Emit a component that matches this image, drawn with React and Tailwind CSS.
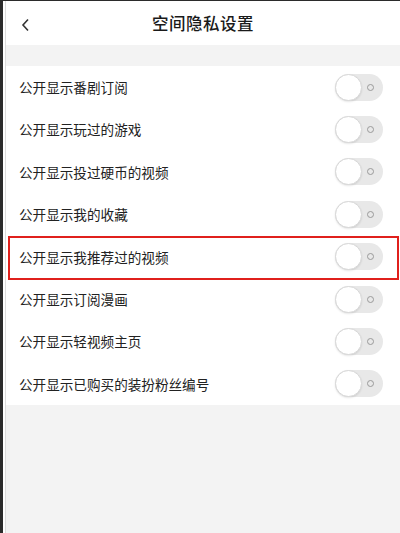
import React from "react";

const items = [
  "公开显示番剧订阅",
  "公开显示玩过的游戏",
  "公开显示投过硬币的视频",
  "公开显示我的收藏",
  "公开显示我推荐过的视频",
  "公开显示订阅漫画",
  "公开显示轻视频主页",
  "公开显示已购买的装扮粉丝编号",
];

const Toggle = () => (
  <div className="relative w-[48px] h-[27px] rounded-full bg-[#e8e8e8]">
    <div className="absolute left-0 top-0 w-[27px] h-[27px] rounded-full bg-white border border-[#d8d8d8] shadow-[0_1px_2px_rgba(0,0,0,0.1)]" />
    <div className="absolute right-[9px] top-[10px] w-[7px] h-[7px] rounded-full border-[1.5px] border-[#9a9a9a]" />
  </div>
);

export default function App() {
  return (
    <div
      className="flex w-[400px] h-[533px] bg-[#2b2b2b] pt-px"
      style={{ fontFamily: '"Noto Sans CJK SC", "Noto Sans", sans-serif' }}
    >
      <div className="w-[3px]" />
      <div className="w-[2px] bg-white" />
      <div className="w-px bg-[#dcdcdc]" />
      <div className="flex-1 flex flex-col bg-[#f3f3f3]">
        {/* Header */}
        <div className="relative flex items-center justify-center h-[44px] bg-white">
          <svg className="absolute left-[15px] top-[17px]" width="9" height="14" viewBox="0 0 9 14">
            <path d="M7 1.5 L2 7 L7 12.5" fill="none" stroke="#333" strokeWidth="1.6" />
          </svg>
          <h1 className="text-[16.5px] font-medium text-[#1a1a1a] tracking-[0.5px]">空间隐私设置</h1>
        </div>
        <div className="h-[21px]" />

        {/* Rows */}
        <div className="bg-white">
          {items.map((label, i) => (
            <div key={i} className="relative flex items-center justify-between h-[42.4px] pl-[13px] pr-[17px]">
              <span className="text-[13.6px] text-[#222]">{label}</span>
              <Toggle />
              {i === 4 && (
                <div className="absolute left-[2px] right-[1px] top-0 bottom-[-2px] border-2 border-[#e0201c]" />
              )}
            </div>
          ))}
        </div>
      </div>
    </div>
  );
}
